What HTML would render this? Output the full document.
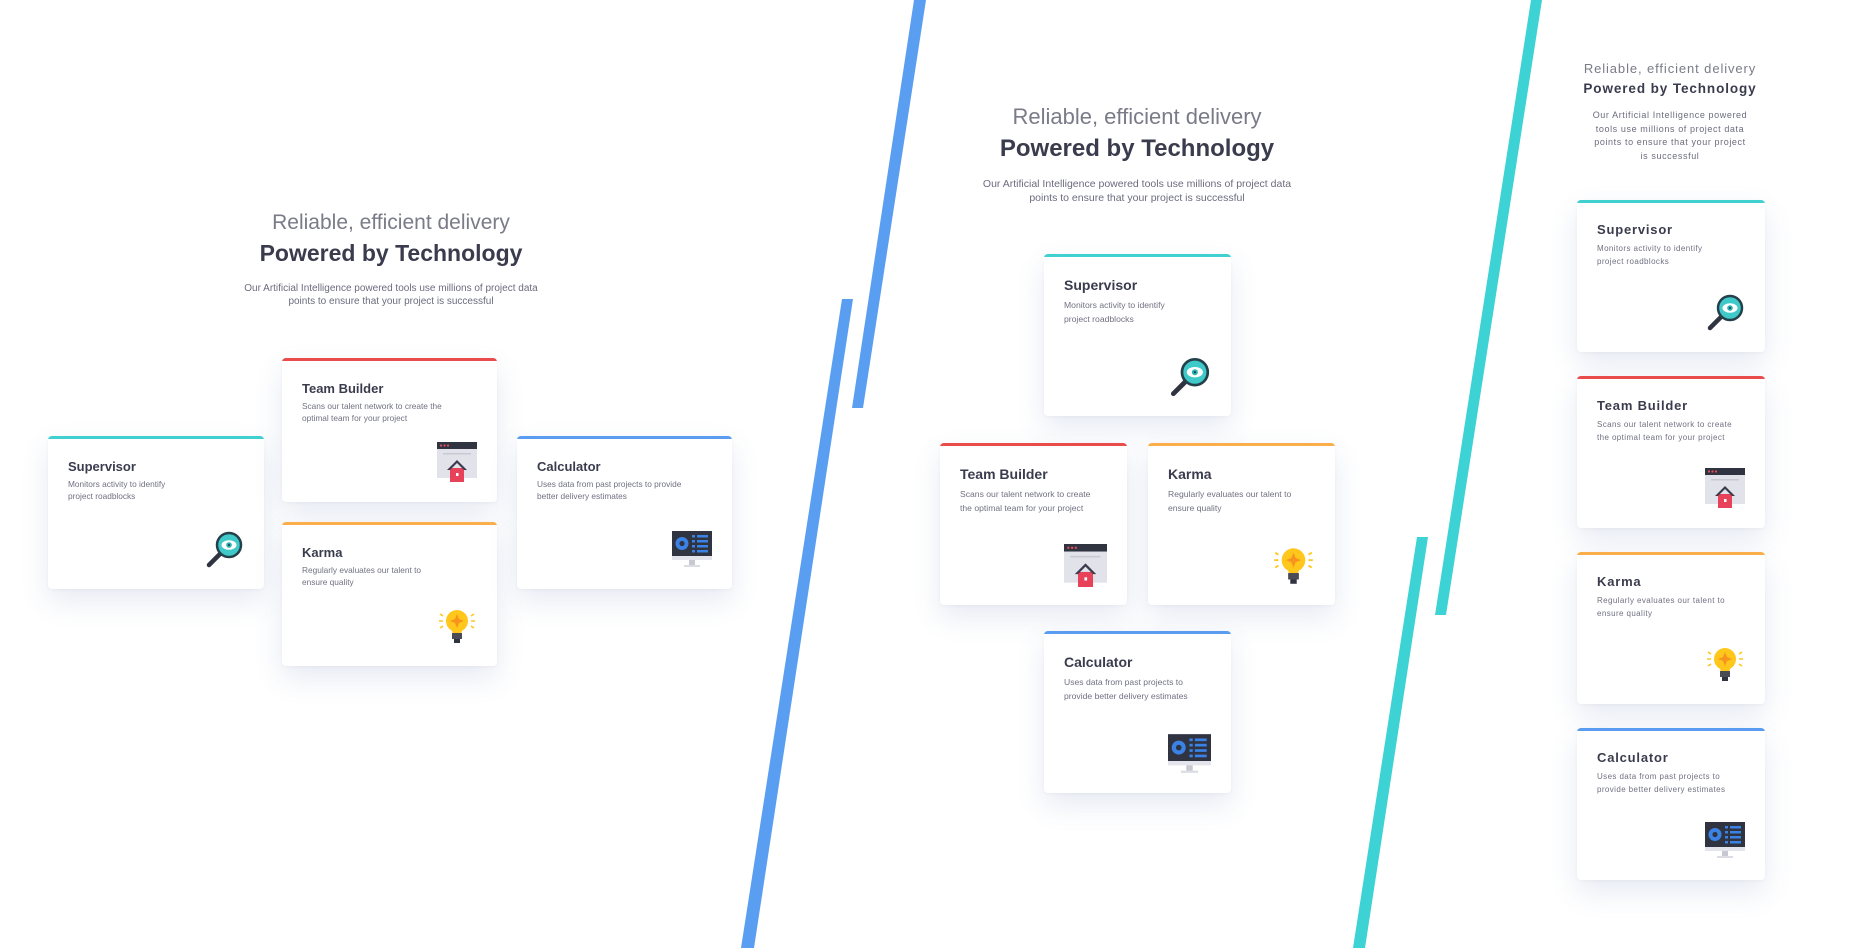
<!DOCTYPE html>
<html><head><meta charset="utf-8"><style>
*{margin:0;padding:0;box-sizing:border-box}
body{width:1867px;height:948px;background:#fff;position:relative;overflow:hidden;font-family:"Liberation Sans",sans-serif;color:#3a3c4e}
.h1{position:absolute;text-align:center;color:#7a7b88;font-weight:300;white-space:nowrap}
.h2{position:absolute;text-align:center;color:#3a3c4e;font-weight:bold;white-space:nowrap}
.p{position:absolute;text-align:center;color:#6b6c7e;white-space:nowrap}
.card{position:absolute;background:#fff;border-radius:4px;box-shadow:0 12px 28px rgba(60,90,160,.13),0 1px 3px rgba(0,0,0,.04);overflow:hidden}
.card:before{content:"";position:absolute;left:0;top:0;right:0;height:3px;background:var(--c)}
.card .t{position:absolute;left:20px;font-weight:bold;color:#3a3c4e;white-space:nowrap}
.card .d{position:absolute;left:20px;color:#707182;white-space:nowrap}
.card svg{position:absolute}
.s1 .t{top:23px;font-size:13px}.s1 .d{top:42px;font-size:8.3px;line-height:12px}
.s1 svg{right:20px;bottom:20px;width:40px;height:40px}
.s2 .t{top:23px;font-size:14px}.s2 .d{top:44px;font-size:8.6px;line-height:14px}
.s2 svg{right:20px;bottom:18px;width:43px;height:43px}
.s3 .t{top:22px;font-size:13px;letter-spacing:.8px}.s3 .d{top:42px;font-size:8px;line-height:13px;letter-spacing:.4px}
.s3 svg{right:20px;bottom:20px;width:40px;height:40px}
.teal{--c:#3fd0cf}.red{--c:#ea4c4c}.orange{--c:#fcae4a}.blue{--c:#5a9cf0}
</style></head><body>

<svg style="position:absolute;left:0;top:0" width="1867" height="948">
<polygon points="914,0 926,0 863,408 852,408" fill="#5a9ef2"/>
<polygon points="842,299 853,299 754,948 741,948" fill="#5a9ef2"/>
<polygon points="1531,0 1542,0 1446,615 1435,615" fill="#3dd2d3"/>
<polygon points="1417,537 1428,537 1365,948 1353,948" fill="#3dd2d3"/>
</svg>

<!-- Panel 1 -->
<div class="h1" style="left:191px;width:400px;top:211px;font-size:21px">Reliable, efficient delivery</div>
<div class="h2" style="left:191px;width:400px;top:240px;font-size:23px">Powered by Technology</div>
<div class="p" style="left:141px;width:500px;top:282px;font-size:10px;line-height:13px">Our Artificial Intelligence powered tools use millions of project data<br>points to ensure that your project is successful</div>

<div class="card s1 teal" style="left:48px;top:436px;width:216px;height:153px"><div class="t">Supervisor</div><div class="d">Monitors activity to identify<br>project roadblocks</div>MAG</div>
<div class="card s1 red" style="left:282px;top:358px;width:215px;height:144px"><div class="t">Team Builder</div><div class="d">Scans our talent network to create the<br>optimal team for your project</div>WIN</div>
<div class="card s1 orange" style="left:282px;top:522px;width:215px;height:144px"><div class="t">Karma</div><div class="d">Regularly evaluates our talent to<br>ensure quality</div>BULB</div>
<div class="card s1 blue" style="left:517px;top:436px;width:215px;height:153px"><div class="t">Calculator</div><div class="d">Uses data from past projects to provide<br>better delivery estimates</div>MON</div>

<!-- Panel 2 -->
<div class="h1" style="left:937px;width:400px;top:104px;font-size:22px">Reliable, efficient delivery</div>
<div class="h2" style="left:937px;width:400px;top:135px;font-size:24px">Powered by Technology</div>
<div class="p" style="left:887px;width:500px;top:177px;font-size:10.5px;line-height:14px">Our Artificial Intelligence powered tools use millions of project data<br>points to ensure that your project is successful</div>

<div class="card s2 teal" style="left:1044px;top:254px;width:187px;height:162px"><div class="t">Supervisor</div><div class="d">Monitors activity to identify<br>project roadblocks</div>MAG</div>
<div class="card s2 red" style="left:940px;top:443px;width:187px;height:162px"><div class="t">Team Builder</div><div class="d">Scans our talent network to create<br>the optimal team for your project</div>WIN</div>
<div class="card s2 orange" style="left:1148px;top:443px;width:187px;height:162px"><div class="t">Karma</div><div class="d">Regularly evaluates our talent to<br>ensure quality</div>BULB</div>
<div class="card s2 blue" style="left:1044px;top:631px;width:187px;height:162px"><div class="t">Calculator</div><div class="d">Uses data from past projects to<br>provide better delivery estimates</div>MON</div>

<!-- Panel 3 -->
<div class="h1" style="left:1570px;width:200px;top:61px;font-size:13px;letter-spacing:.9px">Reliable, efficient delivery</div>
<div class="h2" style="left:1570px;width:200px;top:81px;font-size:13.5px;letter-spacing:.9px">Powered by Technology</div>
<div class="p" style="left:1570px;width:200px;top:109px;font-size:9px;line-height:13.5px;letter-spacing:.6px">Our Artificial Intelligence powered<br>tools use millions of project data<br>points to ensure that your project<br>is successful</div>

<div class="card s3 teal" style="left:1577px;top:200px;width:188px;height:152px"><div class="t">Supervisor</div><div class="d">Monitors activity to identify<br>project roadblocks</div>MAG</div>
<div class="card s3 red" style="left:1577px;top:376px;width:188px;height:152px"><div class="t">Team Builder</div><div class="d">Scans our talent network to create<br>the optimal team for your project</div>WIN</div>
<div class="card s3 orange" style="left:1577px;top:552px;width:188px;height:152px"><div class="t">Karma</div><div class="d">Regularly evaluates our talent to<br>ensure quality</div>BULB</div>
<div class="card s3 blue" style="left:1577px;top:728px;width:188px;height:152px"><div class="t">Calculator</div><div class="d">Uses data from past projects to<br>provide better delivery estimates</div>MON</div>

<script>
var I={
MAG:'<svg viewBox="0 0 40 40"><line x1="5" y1="36" x2="16" y2="25" stroke="#2f3440" stroke-width="4.5" stroke-linecap="round"/><circle cx="25" cy="16" r="12" fill="#3fc9c9" stroke="#24414b" stroke-width="2.5"/><ellipse cx="25" cy="16" rx="7.5" ry="4.8" fill="#fff"/><circle cx="25" cy="16" r="2.8" fill="#2ab3b3"/><circle cx="25" cy="16" r="1" fill="#1f3a44"/></svg>',
WIN:'<svg viewBox="0 0 40 40"><rect x="0" y="0" width="40" height="36" fill="#e2e2ea"/><rect x="0" y="0" width="40" height="7" fill="#2f3440"/><circle cx="4" cy="3.5" r="1.1" fill="#ea4c5c"/><circle cx="7.5" cy="3.5" r="1.1" fill="#ea4c5c"/><circle cx="11" cy="3.5" r="1.1" fill="#ea4c5c"/><rect x="6" y="11" width="28" height="1.5" fill="#c9c9d3"/><rect x="13" y="26" width="14" height="14" fill="#e8415a"/><polygon points="10,28 20,18 30,28 27,28 20,21 13,28" fill="#3a3c4e"/><rect x="19" y="31" width="2.5" height="3" fill="#fff"/></svg>',
BULB:'<svg viewBox="0 0 40 40"><circle cx="20" cy="15" r="11" fill="#ffc61b"/><path d="M14 22 L26 22 L24 28 L16 28Z" fill="#ffc61b"/><path d="M20 8 L22 13 L27 15 L22 17 L20 22 L18 17 L13 15 L18 13Z" fill="#f7941d"/><rect x="15" y="27" width="10" height="6" fill="#4a4b55"/><rect x="17" y="33" width="6" height="4" fill="#2f3440"/><g stroke="#ffc61b" stroke-width="1.6"><line x1="2" y1="15" x2="6" y2="15"/><line x1="34" y1="15" x2="38" y2="15"/><line x1="3" y1="8" x2="6" y2="10"/><line x1="37" y1="8" x2="34" y2="10"/><line x1="3" y1="22" x2="6" y2="20"/><line x1="37" y1="22" x2="34" y2="20"/></g></svg>',
MON:'<svg viewBox="0 0 40 40"><rect x="0" y="2" width="40" height="25" fill="#2f3440"/><circle cx="10" cy="14.5" r="6.5" fill="#3b82e6"/><circle cx="10" cy="14.5" r="2.6" fill="#2f3440"/><g fill="#3b82e6"><rect x="20" y="6" width="3" height="2.5"/><rect x="25" y="6" width="11" height="2.5"/><rect x="20" y="11" width="3" height="2.5"/><rect x="25" y="11" width="11" height="2.5"/><rect x="20" y="16" width="3" height="2.5"/><rect x="25" y="16" width="11" height="2.5"/><rect x="20" y="21" width="3" height="2.5"/><rect x="25" y="21" width="11" height="2.5"/></g><rect x="0" y="27" width="40" height="4" fill="#e4e4ec"/><rect x="17" y="31" width="6" height="5" fill="#c8c8d2"/><rect x="12" y="36" width="16" height="2" fill="#dcdce4"/></svg>'};
document.querySelectorAll('.card').forEach(function(c){var n=c.lastChild;var k=n.nodeValue.trim();n.remove();c.insertAdjacentHTML('beforeend',I[k]);});
</script>
</body></html>
